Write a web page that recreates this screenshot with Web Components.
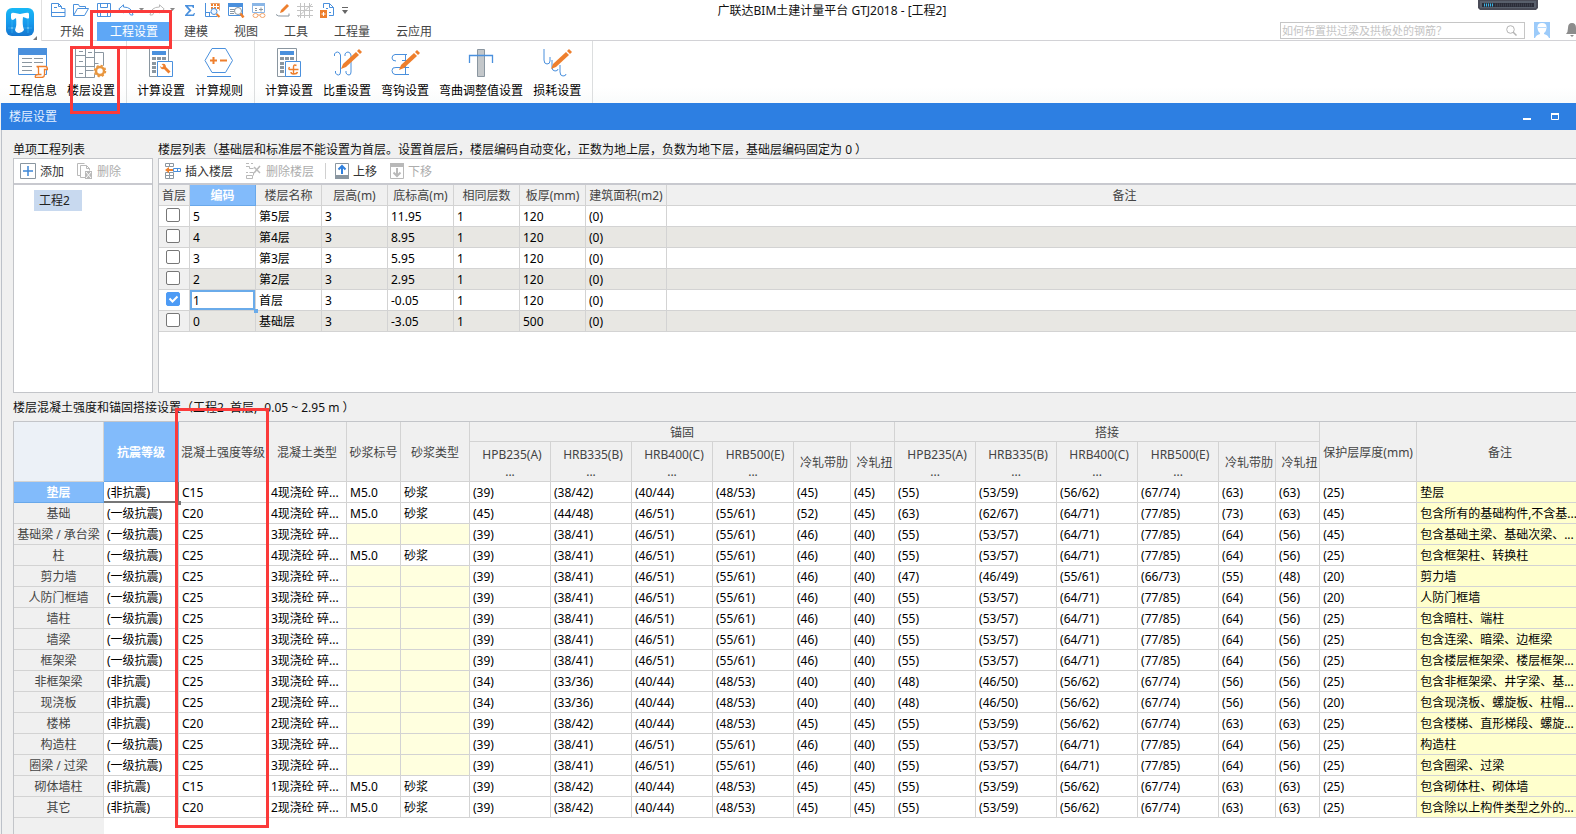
<!DOCTYPE html>
<html lang="zh-CN">
<head>
<meta charset="utf-8">
<title>广联达BIM土建计量平台 GTJ2018</title>
<style>
html, body { margin: 0; }
body {
  font: 12px/18px "Noto Sans", "Noto Sans CJK SC", sans-serif;
  color: #111; background: #f0f0f0; overflow: hidden;
}
</style>
</head>
<body>
<gtj-app></gtj-app>
<script>
const BLUE = '#4a90dd', OR = '#ee7f2d', GR = '#8a96a0', LG = '#b9b9b9';

const pencil = (x, y) => `<g transform="translate(${x} ${y})"><path d="M0 20l2-5 13-12 3 3L5 18z" fill="${OR}"/><path d="M16 2l2-2 3 3-2 2z" fill="${OR}"/></g>`;
const calc = inner => `<path d="M.5.5h19v28H.5z" fill="#fff" stroke="${GR}"/><path d="M3 3h14v4H3z" fill="${BLUE}"/>
  <path d="M3 9h4v3H3zm5 0h4v3H8zm5 0h4v3h-4zM3 14h4v3H3zm5 0h4v3H8zM3 18h4v3H3zM3 22h4v3H3z" fill="${GR}"/>
  <path d="M8.500 13.500h15v15h-15z" fill="#fff" stroke="${BLUE}"/>${inner}`;

/* name: [width, height, markup] */
const ICONS = {
  logo: [30, 30, `<defs><linearGradient id="g" x1="0" y1="0" x2="0" y2="1"><stop offset="0" stop-color="#18b8f6"/><stop offset=".55" stop-color="#1699ec"/><stop offset="1" stop-color="#1576cf"/></linearGradient></defs>
    <rect x="0" y="0" width="28" height="28" rx="6" fill="url(#g)"/><path d="M2 20h24M22 3v22M6 3v22" stroke="#3cbcf7" stroke-width=".6"/>
    <path d="M5 6q1-2 4-1l5 1 5-1q4-1 4 1v4q-1 1-3 0l-3-1q-1 8 1 13-2 3-5 3t-4-3q2-5 1-12l-3 2q-2 0-2-2z" fill="#fff"/>
    <path d="M6 19.500v1M22 19.500v1M22 7v1" stroke="#fff"/>`],
  corner: [4, 4, `<path d="M4 0v4H0z" fill="#777"/>`],
  caret: [5, 4, `<path d="M0 0h5L2.500 3z" fill="#888"/>`],
  more: [6, 7, `<path d="M0 0h6v1H0zM0 3h6L3 7z" fill="#666"/>`],
  doc: [15, 14, `<path d="M.5 13.500V.5h7l3 3v2H14v8zM7.500.5v3h3M3 4.500h3M.5 9.500H14" fill="none" stroke="${BLUE}"/>`],
  open: [17, 14, `<path d="M.5 12.500V1.500h5l1 2h6v2M.5 12.500l4-7h11l-4 7z" fill="none" stroke="${BLUE}"/>`],
  save: [14, 14, `<path d="M.5.5h13v13H.5zM3.500.5v4h7v-4M3.500 13V8.500h7V13" fill="none" stroke="${BLUE}"/>`],
  undo: [16, 12, `<path d="M5.500.8L.8 5l4.700 4V7q5-1 7 4h2.500Q14 3 5.500 3z" fill="#fff" stroke="${BLUE}"/>`],
  redo: [16, 12, `<path d="M10.500.8L15.200 5l-4.700 4V7q-5-1-7 4H1Q2 3 10.500 3z" fill="#fff" stroke="${LG}"/>`],
  sigma: [10, 11, `<path d="M0 0h9v3H8L7 1.500H3L6.500 5.500 2.500 9.500H8L9 8h1l-1 3H0V10l4-4.500L0 1z" fill="${BLUE}"/>`],
  q1: [16, 15, `<path d="M.5 0v13.500h12M.5 9.500h5M4.500 9v5" fill="none" stroke="${BLUE}"/><path d="M6 1h2v2H6zm3 0h2v2H9zm3 0h2v2h-2zM6 4h2v2H6zm3 0h2v2H9zm3 0h2v2h-2z" fill="${OR}"/><path d="M5.500.5h9v7" fill="none" stroke="#e8a26e"/><circle cx="9" cy="8.500" r="3" fill="#eef6ff" stroke="${BLUE}"/><path d="M11.500 11l3 3" stroke="${OR}" stroke-width="2"/>`],
  q2: [17, 15, `<path d="M.5.5h14v12H.5z" fill="#fff" stroke="${BLUE}"/><path d="M0 0h15v4H0z" fill="${BLUE}"/><path d="M2 6.500h5M2 8.500h4M2 10.500h4" stroke="${GR}"/><circle cx="10" cy="8" r="3.500" fill="#fff" stroke="${GR}"/><path d="M12.500 10.500l3 4" stroke="${OR}" stroke-width="2.500"/>`],
  q3: [14, 15, `<path d="M.5.5h12v9H.5z" fill="#fff" stroke="#8ab6e6"/><path d="M0 0h13v3H0z" fill="#8ab6e6"/><path d="M3 5.500h2M3 7.500h2M7 6.500h4M9 4.500v4" stroke="${GR}"/><path d="M1 12.500q0-2 2.500-2t2.500 2-2.500 2-2.500-2zm7 0q0-2 2.500-2t2.500 2-2.500 2-2.500-2zM6 12h2" fill="#fff" stroke="${OR}" opacity=".7"/>`],
  q4: [14, 13, `<path d="M0 10.500q2 2 5 1.500h8V9.500" fill="none" stroke="${GR}"/><path d="M4 9l1-3 6-6 2 2-6 6z" fill="${OR}"/>`],
  q5: [16, 15, `<path d="M0 3.500h16M0 7.500h16M0 12.500h16M3.500 0v15M7.500 0v15M12.500 0v15M1 14L15 1" fill="none" stroke="#c4c4c4"/>`],
  q6: [15, 15, `<path d="M3.500 5V.5h6l4 4v8H9M9.500.5v4h4M6 5.500h2M9 9.500h2" fill="none" stroke="${BLUE}"/><path d="M0 7h7v8H0z" fill="${OR}"/><path d="M1.500 11h4M3.500 9v4" stroke="#fff"/>`],
  info: [30, 30, `<path d="M.5.5h28v26H.5z" fill="#fff" stroke="${BLUE}"/><path d="M0 0h29v7H0z" fill="${BLUE}"/><path d="M4 10.500h10M16 10.500h9M4 14.500h10M16 14.500h9M4 18.500h10M4 22.500h10" stroke="${GR}"/><path d="M18.500 18.500h9q2 0 2 3h-3v5q0 3-3 3h-6q-1-3 3-3v-6q0-2-2-2zM20.500 26.500h3" fill="#fff" stroke="${OR}" stroke-width="1.300"/>`],
  floors: [32, 32, `<path d="M.5 0v29.500h19V0M.5 7.500h10M.5 18.500h10M10.500 9.500h9M10.500 18.500h9M10.500 22.500h9M10.500 0v29M19.500 4.500h9V18M4 3.500h4M4 13.500h4M4 25.500h4M13 4.500h4M19.500 15.500h4" fill="none" stroke="${GR}"/><circle cx="25" cy="23" r="6.500" fill="#fff"/><circle cx="25" cy="23" r="4" fill="none" stroke="#e8963f" stroke-width="2.500"/><circle cx="25" cy="23" r="5.500" fill="none" stroke="#e8963f" stroke-width="1.500" stroke-dasharray="2.200 2.120"/>`],
  calcWrench: [24, 30, calc(`<path d="M12.500 16q3-1 4 1l.5 2 4.500 4.500-2 2L15 21q-3 1-4-3l2 1.500 1.500-1.500z" fill="${OR}"/>`)],
  calcArrow: [24, 30, calc(`<path d="M12.500 19q-1.500 2.500.5 2.500h8.500M16.500 26.500V19q0-3 3-1.500M16.500 26q3.500 0 4-2M14 24q0 2 2.500 2" fill="none" stroke="${OR}" stroke-width="1.400"/>`)],
  rule: [30, 30, `<path d="M8 .5h13.500l7 12-7 12H8l-7-12z" fill="#fff" stroke="${BLUE}"/><path d="M6 12.500h7M9.500 9v7M16 12.500h7" stroke="${OR}" stroke-width="2"/><path d="M3 28.500h24" stroke="${BLUE}"/>`],
  ratio: [29, 30, `<path d="M1.500 8V6q1-2 3-2t3 3v17q0 3-2 3t-3-2v-2M12 8V6q1-2 3-2t3 3v17q0 3-2 3t-3-2v-2" fill="none" stroke="${BLUE}"/>${pencil(8, 1)}`],
  hook: [29, 30, `<path d="M16 6.500H4Q1 7 1 10t4 3M18 26.500H4Q1 26 1 22.500t4-3h13M14.500 6.500v20M11 12.500h9" fill="none" stroke="${BLUE}"/>${pencil(8, 2)}`],
  bend: [26, 30, `<path d="M9.500 1.500h7v27h-7z" fill="#c3c7ca" stroke="${GR}"/><path d="M1.500 15V7.500h23V15" fill="none" stroke="${BLUE}" stroke-width="1.300"/>`],
  loss: [29, 30, `<path d="M1 1v11q0 4 3 4t3-3V9M9 12v7q0 4 3 4t3-2M17 17v7q0 4 3 4t3-2" fill="none" stroke="${BLUE}"/>${pencil(8, 1)}`],
  add: [16, 16, `<path d="M.5.5h15v15H.5z" fill="#fff" stroke="${GR}"/><path d="M8 3v10M3 8h10" stroke="#3d87d8" stroke-width="1.500"/>`],
  del: [16, 16, `<path d="M3 12.500H.5V.5h7M3.500 2.500h6l3 3v2M3.500 2.500v12H8M9.500 2.500v3h3" fill="none" stroke="${LG}"/><path d="M8 8h7v8H8z" fill="${LG}"/><path d="M9 9l5 6M14 9l-5 6" stroke="#fff"/>`],
  insert: [16, 16, `<path d="M.5.5h4v3h-4zM4.500.5h4v3h-4zM.5 12.500h4v3h-4zM4.500 12.500h4v3h-4zM.5 9.500h8v3h-8zM4.500 9.500v3" fill="none" stroke="${GR}"/><path d="M0 7l4-3v2h5v2H4v2z" fill="${OR}"/><path d="M8.500 5.500h7v3h-7zM12.500 5.500v3" fill="none" stroke="${BLUE}"/>`],
  delFloor: [16, 16, `<path d="M0 .5h3M5 .5h2M0 3.500h3.500v2h4M.5 12.500h6v3h-6zM3.500 9.500h4v3M0 9.500h2" fill="none" stroke="${LG}"/><path d="M8 4l6 6M14 3L8 10" stroke="${LG}" stroke-width="1.500"/>`],
  up: [14, 16, `<path d="M.5.5h13v15H.5z" fill="#fff" stroke="${GR}"/><path d="M0 12h14v4H0z" fill="${GR}"/><path d="M7 11V3M3.500 6.500L7 3l3.500 3.500" fill="none" stroke="#2f80de" stroke-width="2"/>`],
  down: [14, 16, `<path d="M.5.5h13v15H.5z" fill="#fff" stroke="${LG}"/><path d="M0 0h14v4H0z" fill="${LG}"/><path d="M7 5v8M3.500 9.500L7 13l3.500-3.500" fill="none" stroke="${LG}" stroke-width="2"/>`],
  search: [11, 11, `<circle cx="4.500" cy="4.500" r="3.800" fill="none" stroke="#b4b4b4"/><path d="M7 7l3.500 3.500" stroke="#b4b4b4" stroke-width="1.500"/>`],
  user: [16, 16, `<path d="M0 0h16v16H0z" fill="#9ccbfa"/><path d="M8 1q5 0 4.500 5-.5 4-2.500 5v1q4 1 5 4H1q1-3 5-4v-1q-2-1-2.500-5Q3 1 8 1z" fill="#fff"/><path d="M4 5.500h8" stroke="#b9dcff"/>`],
  bell: [12, 14, `<path d="M6 0q4 0 4 5 0 4 2 6H0q2-2 2-6 0-5 4-5zM4 12h4l-2 2z" fill="#8c8c8c"/>`],
  meter: [60, 10, `<path d="M0 0h60v8l-2 2H2L0 8z" fill="#4a4c57"/><path d="M2 1h56v7H2z" fill="#59606c"/><path d="M4 3h52v4H4z" fill="#2b2d38"/><path d="M6 5h10" stroke="#3ab5e6" stroke-width="3" stroke-dasharray="1 1"/><path d="M17 5h38" stroke="#3d404c" stroke-width="3" stroke-dasharray="1 1"/>`],
  min: [8, 8, `<path d="M0 5h8v2H0z" fill="#fff"/>`],
  max: [8, 8, `<path d="M.5 1h7v5.500h-7z" fill="none" stroke="#fff"/><path d="M0 0h8v2H0z" fill="#fff"/>`]
};

function define(name, render) {
  customElements.define(name, class extends HTMLElement {
    constructor() { super(); this.attachShadow({ mode: 'open' }); }
    connectedCallback() { this.shadowRoot.innerHTML = render(this); }
  });
}

define('g-icon', el => {
  const [w, h, body] = ICONS[el.getAttribute('name')];
  return `<style>:host{display:block;flex:none}svg{display:block}</style>
    <svg width="${w}" height="${h}" viewBox="0 0 ${w} ${h}" aria-hidden="true">${body}</svg>`;
});

define('quick-access', () => `
<style>
:host{display:flex;align-items:center;height:20px;padding-left:9px}
button{border:0;padding:0;background:none;display:flex;margin-right:7px}
.s{margin-right:5px}.w{margin-right:10px}
</style>` + [['doc', '新建', ''], ['open', '打开', ''], ['save', '保存', ''], ['undo', '撤销', 's'], ['caret', '撤销列表', 's'], ['redo', '恢复', 's'],
  ['caret', '恢复列表', 'w'], ['sigma', '汇总计算', 'w'], ['q1', '查看工程量', ''], ['q2', '查看计算式', ''], ['q3', '查看钢筋量', 'w'],
  ['q4', '编辑', ''], ['q5', '轴网', ''], ['q6', '导入', ''], ['more', '更多', '']]
  .map(([i, t, c]) => `<button class="${c}" aria-label="${t}"><g-icon name="${i}"></g-icon></button>`).join(''));

define('menu-tab', el => `
<style>
:host{display:block}
button{font:inherit;border:0;height:19px;padding:0 13px;background:none;color:#444;display:block}
:host([active]) button{background:#5ea7f6;color:#fff}
</style><button><slot></slot></button>`);

define('search-box', () => `
<style>
:host{display:flex;align-items:center;box-sizing:border-box;width:245px;height:17px;border:1px solid #c6c6c6;padding:0 7px 0 1px;background:#fff}
input{flex:1;min-width:0;border:0;padding:0;background:none;outline:0;font:11px/15px "Noto Sans","Noto Sans CJK SC",sans-serif}
input::placeholder{color:#c4c4c4}
</style><input aria-label="搜索" placeholder="如何布置拱过梁及拱板处的钢筋？"><g-icon name="search"></g-icon>`);

define('app-header', () => `
<style>
:host{display:flex;height:41px;background:#fff}
.logo{position:relative;flex:none;width:42px;height:41px;box-sizing:border-box;padding:8px 0 0 6px;border-right:1px solid #e0e0e0}
.logo .c{position:absolute;right:4px;bottom:1px}
.main{flex:1;min-width:0;display:flex;flex-direction:column}
.top{display:flex;height:22px}
.title{flex:1;text-align:center;line-height:22px;white-space:nowrap}
.right{width:267px;display:flex;justify-content:flex-end;padding-right:38px;box-sizing:border-box}
nav{display:flex;height:18px;border-bottom:1px solid #d2d2d6;padding-left:5px}
.tools{margin-left:auto;display:flex;align-items:flex-start;gap:9px}
.tools g-icon:last-child{margin:1px -2px 0 7px}
</style>
<div class="logo"><g-icon name="logo"></g-icon><g-icon class="c" name="corner"></g-icon></div>
<div class="main">
  <div class="top"><quick-access></quick-access><div class="title">广联达BIM土建计量平台 GTJ2018 - [工程2]</div><div class="right"><g-icon name="meter"></g-icon></div></div>
  <nav><menu-tab>开始</menu-tab><menu-tab active>工程设置</menu-tab><menu-tab>建模</menu-tab><menu-tab>视图</menu-tab><menu-tab>工具</menu-tab><menu-tab>工程量</menu-tab><menu-tab>云应用</menu-tab>
    <div class="tools"><search-box></search-box><g-icon name="user"></g-icon><g-icon name="bell"></g-icon></div></nav>
</div>`);

define('ribbon-button', el => `
<style>
:host{display:block}
button{font:inherit;color:#000;border:0;background:none;padding:0 5px;display:flex;flex-direction:column;align-items:center;white-space:nowrap}
.i{height:34px;display:flex;align-items:flex-start}
</style><button><span class="i"><g-icon name="${el.getAttribute('icon')}"></g-icon></span><slot></slot></button>`);

define('ribbon-bar', () => `
<style>
:host{display:flex;height:62px;padding-left:4px;background:linear-gradient(#fff 75%,#f9fbfb)}
ribbon-button{padding-top:7px}
i{width:1px;margin:0 5px 0 6px;background:#dcdedf}
</style>
<ribbon-button icon="info">工程信息</ribbon-button><ribbon-button icon="floors">楼层设置</ribbon-button><i></i>
<ribbon-button icon="calcWrench">计算设置</ribbon-button><ribbon-button icon="rule">计算规则</ribbon-button><i></i>
<ribbon-button icon="calcArrow">计算设置</ribbon-button><ribbon-button icon="ratio">比重设置</ribbon-button><ribbon-button icon="hook">弯钩设置</ribbon-button><ribbon-button icon="bend">弯曲调整值设置</ribbon-button><ribbon-button icon="loss">损耗设置</ribbon-button><i></i>`);

define('window-bar', () => `
<style>
:host{display:flex;align-items:center;height:27px;margin-left:1px;padding:0 17px 0 8px;background:#2d7fe2;color:#e4efff}
span{flex:1}
button{border:0;background:none;padding:0;margin-left:20px}
</style><span><slot></slot></span><button aria-label="最小化"><g-icon name="min"></g-icon></button><button aria-label="最大化"><g-icon name="max"></g-icon></button>`);

define('tool-button', el => `
<style>
:host{display:block}
button{font:inherit;color:#333;border:0;border-radius:3px;background:none;height:22px;padding:0 4px;display:flex;align-items:center;gap:4px;white-space:nowrap}
button:disabled{color:#adadad}
span{padding-top:2px}
</style><button ${el.hasAttribute('disabled') ? 'disabled' : ''}><g-icon name="${el.getAttribute('icon')}"></g-icon><span><slot></slot></span></button>`);

define('list-panel', el => `
<style>
:host{display:flex;flex-direction:column}
h2{margin:0;padding-top:12px;font:inherit;line-height:16px;white-space:nowrap}
.box{box-sizing:border-box;min-height:235px;border:1px solid #c3c5c9;background:#fff}
.bar{display:flex;align-items:center;height:24px;padding-left:2px;border-bottom:2px solid #c8c9cf}
</style><h2>${el.getAttribute('heading')}</h2><div class="box"><div class="bar"><slot name="bar"></slot></div><slot></slot></div>`);

const GRID = `
table{border-collapse:separate;border-spacing:0;table-layout:fixed;width:100%}
th,td{box-sizing:border-box;height:21px;padding:2px 0 0 3px;border:solid #d3d3d3;border-width:0 1px 1px 0;line-height:18px;white-space:nowrap;overflow:hidden;text-align:left;color:#000}
th{padding:2px 0 0;background:#f0f0f0;font-weight:400;text-align:center;color:#444}
th.on{background:#82bbfb;color:#fff;font-weight:700;border-color:#69a8ea}`;

define('floor-table', () => {
  const rows = [['5', '第5层', '11.95', '120'], ['4', '第4层', '8.95', '120'], ['3', '第3层', '5.95', '120'], ['2', '第2层', '2.95', '120'], ['1', '首层', '-0.05', '120'], ['0', '基础层', '-3.05', '500']];
  return `<style>:host{display:block}${GRID}
tr:nth-child(even) td{background:#e8e7e3}
td:first-child{padding:0}
tr:nth-child(even) td:first-child{background:#f0f0f0}
input{appearance:none;display:block;box-sizing:border-box;width:14px;height:14px;margin:0 auto 2px 7px;border:1px solid #777;border-radius:2px;background:#fff}
input:checked{border-color:#4d9bf5;background:#4d9bf5}
label{display:block;position:relative}
svg{position:absolute;left:7px;top:0;pointer-events:none}
td.cur{position:relative;overflow:visible;box-shadow:inset 0 0 0 2px #6aabea}
td.cur::after{content:"";position:absolute;right:-3px;bottom:-3px;width:4px;height:4px;background:#6aabea}
</style><table><colgroup><col style="width:31px">${'<col style="width:66px">'.repeat(6)}<col style="width:81px"><col></colgroup>
<thead><tr><th>首层</th><th class="on">编码</th><th>楼层名称</th><th>层高(m)</th><th>底标高(m)</th><th>相同层数</th><th>板厚(mm)</th><th>建筑面积(m2)</th><th>备注</th></tr></thead>
<tbody>${rows.map(r => { const on = r[0] === '1';
    return `<tr><td><label><input type="checkbox" aria-label="${r[1]}设为首层"${on ? ' checked' : ''}>${on ? '<svg width="14" height="14"><path d="M3.500 6.500l3 3 5-5" fill="none" stroke="#fff" stroke-width="2"/></svg>' : ''}</label></td><td${on ? ' class="cur"' : ''}>${r[0]}</td><td>${r[1]}</td><td>3</td><td>${r[2]}</td><td>1</td><td>${r[3]}</td><td>(0)</td><td></td></tr>`; }).join('')}</tbody></table>`;
});

define('strength-table', () => {
  const A = '39 38/42 40/44 48/53 45 45', A2 = '55 53/59 56/62 67/74 63 63';
  const B = '39 38/41 46/51 55/61 46 40', B2 = '55 53/57 64/71 77/85 64 56';
  const C = '34 33/36 40/44 48/53 40 40', C2 = '48 46/50 56/62 67/74 56 56';
  const N = '非抗震', Y = '一级抗震';
  const rows = [
    ['垫层', N, 'C15', 4, 1, A, A2, 25, '垫层'],
    ['基础', Y, 'C20', 4, 1, '45 44/48 46/51 55/61 52 45', '63 62/67 64/71 77/85 73 63', 45, '包含所有的基础构件,不含基...'],
    ['基础梁 / 承台梁', Y, 'C25', 3, 0, B, B2, 45, '包含基础主梁、基础次梁、...'],
    ['柱', Y, 'C25', 4, 1, B, B2, 25, '包含框架柱、转换柱'],
    ['剪力墙', Y, 'C25', 3, 0, B, '47 46/49 55/61 66/73 55 48', 20, '剪力墙'],
    ['人防门框墙', Y, 'C25', 3, 0, B, B2, 20, '人防门框墙'],
    ['墙柱', Y, 'C25', 3, 0, B, B2, 25, '包含暗柱、端柱'],
    ['墙梁', Y, 'C25', 3, 0, B, B2, 25, '包含连梁、暗梁、边框梁'],
    ['框架梁', Y, 'C25', 3, 0, B, B2, 25, '包含楼层框架梁、楼层框架...'],
    ['非框架梁', N, 'C25', 3, 0, C, C2, 25, '包含非框架梁、井字梁、基...'],
    ['现浇板', N, 'C25', 2, 0, C, C2, 20, '包含现浇板、螺旋板、柱帽...'],
    ['楼梯', N, 'C20', 2, 0, A, A2, 25, '包含楼梯、直形梯段、螺旋...'],
    ['构造柱', Y, 'C25', 3, 0, B, B2, 25, '构造柱'],
    ['圈梁 / 过梁', Y, 'C25', 3, 0, B, B2, 25, '包含圈梁、过梁'],
    ['砌体墙柱', N, 'C15', 1, 1, A, A2, 25, '包含砌体柱、砌体墙'],
    ['其它', N, 'C20', 2, 1, A, A2, 25, '包含除以上构件类型之外的...']];
  const cells = s => s.split(' ').map(v => `<td>(${v})</td>`).join('');
  const six = '<th class="s d">HPB235(A)<span>...</span></th><th class="s d">HRB335(B)<span>...</span></th><th class="s d">HRB400(C)<span>...</span></th><th class="s d">HRB500(E)<span>...</span></th><th class="s">冷轧带肋</th><th class="s">冷轧扭</th>';
  const w = [90, 75, 89, 79, 54, 69, 81, 81, 81, 81, 57, 44, 81, 81, 81, 81, 57, 44, 97];
  return `<style>:host{display:flex;flex-direction:column;border:solid #c3c5c9;border-width:1px 0 0 1px;background:#fff}${GRID}
th.g{height:20px;line-height:17px}
th.s{height:40px;padding-left:4px}
th.d{line-height:19px;vertical-align:top;padding-top:3px}
th span{display:block;padding-right:4px;line-height:16px}
th.k{background:#ecf1f7}
td.e{background:#ffffdf}
td:last-child{background:#ffffcd}
td.cur{position:relative;overflow:visible;box-shadow:inset -1px -1px #777;border-color:#777}
td.cur::after{content:"";position:absolute;right:-3px;bottom:-3px;width:4px;height:4px;background:#777}
.rest{flex:1;width:90px;background:#f0f0f0}
</style><table><colgroup>${w.map(x => `<col style="width:${x}px">`).join('')}<col></colgroup>
<thead><tr><th class="k g" rowspan="2"></th><th class="on" rowspan="2">抗震等级</th><th rowspan="2">混凝土强度等级</th><th rowspan="2">混凝土类型</th><th rowspan="2">砂浆标号</th><th rowspan="2">砂浆类型</th><th class="g" colspan="6">锚固</th><th class="g" colspan="6">搭接</th><th rowspan="2">保护层厚度(mm)</th><th rowspan="2">备注</th></tr>
<tr>${six}${six}</tr></thead>
<tbody>${rows.map((r, i) => `<tr><th${i ? '' : ' class="on"'}>${r[0]}</th><td${i ? '' : ' class="cur"'}>(${r[1]})</td><td>${r[2]}</td><td>${r[3]}现浇砼 碎...</td>${r[4] ? '<td>M5.0</td><td>砂浆</td>' : '<td class="e"></td><td class="e"></td>'}${cells(r[5])}${cells(r[6])}<td>(${r[7]})</td><td>${r[8]}</td></tr>`).join('')}</tbody></table><div class="rest"></div>`;
});

/* red highlight frame floating over the page */
define('mark-box', () => `<style>:host{position:absolute;box-sizing:border-box;border:3px solid #fb3a3a;pointer-events:none}</style>`);

define('gtj-app', () => `
<style>
:host{position:relative;display:flex;flex-direction:column;min-height:100vh;overflow:hidden}
main{flex:1;display:flex;flex-direction:column;margin:0 -8px 0 1px;padding-left:11px;border-left:1px solid #bcc1c9}
.panels{display:flex;gap:5px}
.p1{width:140px}.p2{flex:1;min-width:0}
.item{display:inline-block;margin:5px 0 0 20px;padding:0 12px 0 5px;line-height:21px;background:#c8d9ef;color:#222;text-decoration:none}
i{width:1px;height:16px;margin:0 5px 0 7px;background:#d0d0d0}
.n{margin-left:5px}
h2{margin:7px 0 5px;font:inherit;line-height:16px}
strength-table{flex:1}
.m1{left:90px;top:10px;width:82px;height:39px}
.m2{left:70px;top:46px;width:50px;height:68px}
.m3{left:175px;top:408px;width:94px;height:420px}
</style>
<app-header></app-header><ribbon-bar></ribbon-bar><window-bar>楼层设置</window-bar>
<main>
  <div class="panels">
    <list-panel class="p1" heading="单项工程列表"><tool-button slot="bar" icon="add">添加</tool-button><tool-button slot="bar" class="n" icon="del" disabled>删除</tool-button><a class="item" href="#">工程2</a></list-panel>
    <list-panel class="p2" heading="楼层列表（基础层和标准层不能设置为首层。设置首层后，楼层编码自动变化，正数为地上层，负数为地下层，基础层编码固定为 0 ）">
      <tool-button slot="bar" icon="insert">插入楼层</tool-button><tool-button slot="bar" class="n" icon="delFloor" disabled>删除楼层</tool-button><i slot="bar"></i><tool-button slot="bar" icon="up">上移</tool-button><tool-button slot="bar" class="n" icon="down" disabled>下移</tool-button>
      <floor-table></floor-table></list-panel>
  </div>
  <h2>楼层混凝土强度和锚固搭接设置（工程2&nbsp; 首层, -0.05 ~ 2.95 m ）</h2>
  <strength-table></strength-table>
</main>
<mark-box class="m1"></mark-box><mark-box class="m2"></mark-box><mark-box class="m3"></mark-box>`);
</script>
</body>
</html>
